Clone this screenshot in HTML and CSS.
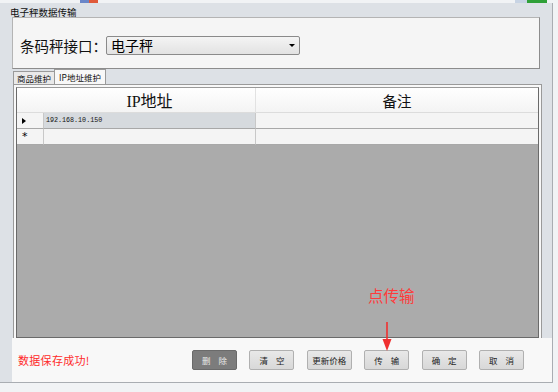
FILE: index.html
```html
<!DOCTYPE html>
<html>
<head>
<meta charset="utf-8">
<link rel="stylesheet" href="styles.css">
</head>
<body>
<div class="strip">
  <span class="frag frag-a"></span><span class="frag frag-b"></span>
  <span class="frag frag-c"></span><span class="frag frag-d"></span>
</div>
<div class="window">
  <div class="title">电子秤数据传输</div>
  <div class="group">
    <span class="lbl">条码秤接口：</span>
    <div class="combo"><span>电子秤</span><span class="arrow"></span></div>
  </div>
  <div class="tabs">
    <div class="tab">商品维护</div>
    <div class="tab active">IP地址维护</div>
  </div>
  <div class="page">
    <div class="grid">
      <div class="row head">
        <div class="c rh"></div>
        <div class="c ip">IP地址</div>
        <div class="c note">备注</div>
      </div>
      <div class="row sel">
        <div class="c rh"><span class="tri"></span></div>
        <div class="c ip">192.168.10.150</div>
        <div class="c note"></div>
      </div>
      <div class="row">
        <div class="c rh star">*</div>
        <div class="c ip"></div>
        <div class="c note"></div>
      </div>
      <div class="empty"></div>
    </div>
  </div>
  <div class="bottom">
    <div class="status">数据保存成功!</div>
    <div class="btns">
      <button class="btn dark">删 除</button>
      <button class="btn">清 空</button>
      <button class="btn tight">更新价格</button>
      <button class="btn">传 输</button>
      <button class="btn">确 定</button>
      <button class="btn">取 消</button>
    </div>
  </div>
  <div class="note-anno">点传输</div>
  <svg class="anno-arrow" width="14" height="32" viewBox="0 0 14 32">
    <line x1="7" y1="0" x2="7" y2="20" stroke="#f03030" stroke-width="1.6"/>
    <polygon points="2.5,17 11.5,17 7,29" fill="#f03030"/>
  </svg>
</div>
</body>
</html>
```
FILE: styles.css
```css
* { box-sizing: border-box; }
html, body { margin: 0; padding: 0; }
body {
  width: 558px; height: 392px; overflow: hidden;
  background: #f1f3f5;
  font-family: "Noto Sans CJK SC", "Noto Sans", sans-serif;
  color: #000;
}
.strip { height: 3px; display: flex; position: relative; }
.frag { display: block; height: 3px; }
.frag-a { margin-left: 80px; width: 9px; background: #6a86c8; }
.frag-b { width: 9px; background: #e05a3a; }
.frag-c { margin-left: 417px; width: 12px; background: #c8d4e4; }
.frag-d { width: 20px; background: #2fa038; }

.window {
  position: relative;
  width: 553px; height: 380px;
  background: #dde1e6;
  border-right: 1px solid #a9adb2;
  border-bottom: 1px solid #a9adb2;
  display: flex; flex-direction: column;
}
.title {
  height: 14px; padding-left: 10px; padding-top: 4px;
  font-size: 9.5px; line-height: 10px; color: #111;
}
.group {
  margin-left: 12px; width: 528px; height: 52px;
  background: #f5f5f5;
  border: 1px solid #b4b4b4;
  border-right-color: #8c8c8c; border-bottom-color: #8c8c8c;
  display: flex; align-items: center;
  padding-left: 7px; padding-top: 4px;
}
.lbl { font-size: 14.5px; width: 86px; color: #111; white-space: nowrap; }
.combo {
  width: 194px; height: 19px;
  border: 1px solid #8a8a8a; border-radius: 2px;
  background: linear-gradient(#f4f4f4, #e2e2e2);
  display: flex; align-items: center; justify-content: space-between;
  padding: 0 4px 0 4px;
  font-size: 14px; line-height: 17px;
}
.arrow {
  width: 0; height: 0;
  border-left: 3px solid transparent; border-right: 3px solid transparent;
  border-top: 3px solid #000;
}
.tabs {
  margin-left: 13px; height: 15px; display: flex; align-items: flex-end;
}
.tab {
  height: 13px; padding: 0 3px;
  border: 1px solid #9a9a9a; border-bottom: none;
  background: #e9e9e9;
  font-size: 8.5px; line-height: 12px; color: #111;
}
.tab.active {
  height: 15px; background: #f8f8f8; margin-left: -1px;
  padding: 0 4px; line-height: 14px;
}
.page {
  margin-left: 13px; width: 529px; height: 254px;
  background: #f8f8f8;
  border: 1px solid #9a9a9a; border-bottom: none;
  padding: 2px 2px 0 2px;
}
.grid {
  height: 100%;
  border: 1px solid #6a6a6a;
  border-top-color: #9a9a9a;
  background: #ababab;
  display: flex; flex-direction: column;
}
.row { display: flex; height: 16px; background: #f4f4f4; }
.row.head { height: 25px; background: linear-gradient(#ffffff, #f3f3f3); }
.c { border-right: 1px solid #c8c8c8; border-bottom: 1px solid #a8a8a8; }
.rh { width: 27px; display: flex; align-items: center; padding-left: 5px; background: #f4f4f4; }
.head .rh { background: transparent; border-right: none; border-bottom-color: #dcdcdc; }
.head .c { border-bottom-color: #dcdcdc; border-right-color: #e2e2e2; }
.ip { width: 212px; }
.note { flex: 1; border-right: none; }
.head .ip, .head .note {
  display: flex; align-items: center; justify-content: center;
  font-family: "Liberation Serif", "Noto Sans CJK SC", serif; font-size: 16px; color: #111;
}
.head .note { font-family: "Noto Sans CJK SC", sans-serif; font-size: 14.5px; }
.sel .ip {
  background: #d6dade;
  font-family: "Liberation Mono", monospace; font-size: 6.7px; line-height: 15px;
  padding-left: 2px; color: #111;
}
.tri {
  width: 0; height: 0;
  border-top: 3px solid transparent; border-bottom: 3px solid transparent;
  border-left: 4px solid #000;
}
.star { font-size: 11px; line-height: 15px; font-family: "DejaVu Sans", sans-serif; }
.empty { flex: 1; }

.bottom {
  flex: 1;
  margin-left: 12px;
  background: #f8f8f8;
  display: flex; align-items: center; justify-content: space-between;
  padding: 0 28px 0 6px;
}
.status { color: #ff2a2a; font-size: 11px; letter-spacing: 0.3px; }
.btns { display: flex; gap: 12.4px; }
.btn {
  width: 45px; height: 20px; padding: 0;
  border: 1px solid #b0b0b0; border-radius: 2px;
  background: linear-gradient(#e8e8e8, #d8d8d8);
  font-family: "Noto Sans CJK SC", sans-serif; font-size: 8.5px; color: #222;
  word-spacing: 6px;
}
.btn.tight { word-spacing: 0; }
.btn.dark { background: #7c7c7c; border-color: #6a6a6a; color: #e8e8e8; }

.note-anno {
  position: absolute; left: 368px; top: 283px;
  font-size: 15.5px; color: #ff3a3a; line-height: 18px;
}
.anno-arrow { position: absolute; left: 380px; top: 319px; }
```
